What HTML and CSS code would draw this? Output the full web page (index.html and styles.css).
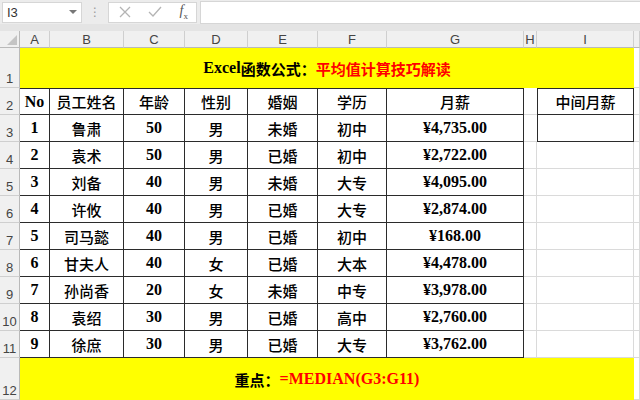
FILE: index.html
```html
<!DOCTYPE html>
<html lang="zh-CN">
<head>
	<meta charset="UTF-8">
	<meta name="viewport" content="width=device-width, initial-scale=1.0">
	<title>平均值计算技巧解读</title>
	<link rel="stylesheet" href="styles.css">
</head>
<body>
	<div class="toolbar">
		<div class="namebox">
			<span>I3</span>
			<span class="caret"></span>
		</div>
		<div class="dots">⋮</div>
		<div class="fxbox">
			<svg width="12" height="12" viewBox="0 0 12 12"><path d="M1 1 L11 11 M11 1 L1 11" stroke="#b4b4b4" stroke-width="1.3" fill="none"/></svg>
			<svg width="14" height="12" viewBox="0 0 14 12"><path d="M1 6 L5 10 L13 1" stroke="#b4b4b4" stroke-width="1.3" fill="none"/></svg>
			<span class="fx"><i>f</i><sub>x</sub></span>
		</div>
		<div class="formula"></div>
	</div>

	<div class="sheet">
		<!-- column headers -->
		<div class="c corner"><span class="tri"></span></div>
		<div class="c ch">A</div>
		<div class="c ch">B</div>
		<div class="c ch">C</div>
		<div class="c ch">D</div>
		<div class="c ch">E</div>
		<div class="c ch">F</div>
		<div class="c ch">G</div>
		<div class="c ch">H</div>
		<div class="c ch">I</div>
		<div class="c ch"></div>

		<!-- row 1 -->
		<div class="c rn">1</div>
		<div class="c banner">Excel<span class="zh">函数公式：</span><span class="zh red">平均值计算技巧解读</span></div>
		<div class="c"></div>

		<!-- row 2 -->
		<div class="c rn">2</div>
		<div class="c t top">No</div>
		<div class="c t top zh">员工姓名</div>
		<div class="c t top zh">年龄</div>
		<div class="c t top zh">性别</div>
		<div class="c t top zh">婚姻</div>
		<div class="c t top zh">学历</div>
		<div class="c t top zh">月薪</div>
		<div class="c gap"></div>
		<div class="c t top side zh">中间月薪</div>
		<div class="c"></div>

		<!-- row 3 -->
		<div class="c rn">3</div>
		<div class="c t">1</div>
		<div class="c t zh">鲁肃</div>
		<div class="c t">50</div>
		<div class="c t zh">男</div>
		<div class="c t zh">未婚</div>
		<div class="c t zh">初中</div>
		<div class="c t">¥4,735.00</div>
		<div class="c gap"></div>
		<div class="c t side"></div>
		<div class="c"></div>

		<!-- row 4 -->
		<div class="c rn">4</div>
		<div class="c t">2</div>
		<div class="c t zh">袁术</div>
		<div class="c t">50</div>
		<div class="c t zh">男</div>
		<div class="c t zh">已婚</div>
		<div class="c t zh">初中</div>
		<div class="c t">¥2,722.00</div>
		<div class="c"></div>
		<div class="c"></div>
		<div class="c"></div>

		<!-- row 5 -->
		<div class="c rn">5</div>
		<div class="c t">3</div>
		<div class="c t zh">刘备</div>
		<div class="c t">40</div>
		<div class="c t zh">男</div>
		<div class="c t zh">未婚</div>
		<div class="c t zh">大专</div>
		<div class="c t">¥4,095.00</div>
		<div class="c"></div>
		<div class="c"></div>
		<div class="c"></div>

		<!-- row 6 -->
		<div class="c rn">6</div>
		<div class="c t">4</div>
		<div class="c t zh">许攸</div>
		<div class="c t">40</div>
		<div class="c t zh">男</div>
		<div class="c t zh">已婚</div>
		<div class="c t zh">大专</div>
		<div class="c t">¥2,874.00</div>
		<div class="c"></div>
		<div class="c"></div>
		<div class="c"></div>

		<!-- row 7 -->
		<div class="c rn">7</div>
		<div class="c t">5</div>
		<div class="c t zh">司马懿</div>
		<div class="c t">40</div>
		<div class="c t zh">男</div>
		<div class="c t zh">已婚</div>
		<div class="c t zh">初中</div>
		<div class="c t">¥168.00</div>
		<div class="c"></div>
		<div class="c"></div>
		<div class="c"></div>

		<!-- row 8 -->
		<div class="c rn">8</div>
		<div class="c t">6</div>
		<div class="c t zh">甘夫人</div>
		<div class="c t">40</div>
		<div class="c t zh">女</div>
		<div class="c t zh">已婚</div>
		<div class="c t zh">大本</div>
		<div class="c t">¥4,478.00</div>
		<div class="c"></div>
		<div class="c"></div>
		<div class="c"></div>

		<!-- row 9 -->
		<div class="c rn">9</div>
		<div class="c t">7</div>
		<div class="c t zh">孙尚香</div>
		<div class="c t">20</div>
		<div class="c t zh">女</div>
		<div class="c t zh">未婚</div>
		<div class="c t zh">中专</div>
		<div class="c t">¥3,978.00</div>
		<div class="c"></div>
		<div class="c"></div>
		<div class="c"></div>

		<!-- row 10 -->
		<div class="c rn">10</div>
		<div class="c t">8</div>
		<div class="c t zh">袁绍</div>
		<div class="c t">30</div>
		<div class="c t zh">男</div>
		<div class="c t zh">已婚</div>
		<div class="c t zh">高中</div>
		<div class="c t">¥2,760.00</div>
		<div class="c"></div>
		<div class="c"></div>
		<div class="c"></div>

		<!-- row 11 -->
		<div class="c rn">11</div>
		<div class="c t">9</div>
		<div class="c t zh">徐庶</div>
		<div class="c t">30</div>
		<div class="c t zh">男</div>
		<div class="c t zh">已婚</div>
		<div class="c t zh">大专</div>
		<div class="c t">¥3,762.00</div>
		<div class="c"></div>
		<div class="c"></div>
		<div class="c"></div>

		<!-- row 12 -->
		<div class="c rn">12</div>
		<div class="c banner"><span class="zh">重点：</span><span class="red">=MEDIAN(G3:G11)</span></div>
		<div class="c"></div>
	</div>
</body>
</html>
```

FILE: styles.css
```css
body {
	margin: 0;
	width: 640px;
	height: 400px;
	overflow: hidden;
	background-color: #fff;
}

.toolbar {
	display: flex;
	align-items: center;
	height: 24px;
	padding-bottom: 7px;
	background-color: #ececec;
	box-shadow: inset 0 -7px 0 #e4e4e4;
}

.namebox {
	display: flex;
	align-items: center;
	justify-content: space-between;
	box-sizing: border-box;
	width: 80px;
	height: 21px;
	margin-left: 2px;
	padding: 0 4px;
	background-color: #fff;
	border: 1px solid #d6d6d6;
	font-family: "Liberation Sans", sans-serif;
	font-size: 13px;
	color: #333;
}

.caret {
	width: 0;
	height: 0;
	border-left: 4px solid transparent;
	border-right: 4px solid transparent;
	border-top: 4px solid #777;
}

.dots {
	width: 26px;
	text-align: center;
	font-family: "DejaVu Sans", sans-serif;
	font-size: 12px;
	color: #9a9a9a;
}

.fxbox {
	display: flex;
	align-items: center;
	justify-content: space-between;
	box-sizing: border-box;
	width: 89px;
	height: 21px;
	padding: 0 8px 0 10px;
	background-color: #fff;
	border: 1px solid #d6d6d6;
}

.fx {
	font-family: "Liberation Serif", serif;
	font-size: 14px;
	color: #555;
}

.fx sub {
	font-size: 9px;
}

.formula {
	flex: 1;
	height: 21px;
	margin-left: 3px;
	background-color: #fff;
	border-left: 1px solid #d6d6d6;
	border-top: 1px solid #d6d6d6;
	border-bottom: 1px solid #d6d6d6;
}

.sheet {
	display: grid;
	grid-template-columns: 20px 30px 74px 61px 63px 70px 69px 137px 13px 97px 1fr;
	grid-template-rows: 17px 40px repeat(10, 27px) 42px;
	font-family: "Liberation Serif", "Noto Sans CJK SC", serif;
	font-weight: bold;
	font-size: 16px;
	color: #000;
}

.zh {
	font-family: "Noto Sans CJK SC", sans-serif;
	font-weight: 500;
	font-size: 15px;
}

.banner .zh {
	font-weight: bold;
}

.c {
	display: flex;
	align-items: center;
	justify-content: center;
	box-sizing: border-box;
	border-right: 1px solid #dadada;
	border-bottom: 1px solid #dadada;
	white-space: nowrap;
}

.ch {
	background-color: #f0f0f0;
	border-right-color: #cfcfcf;
	border-bottom-color: #b9b9b9;
	font-family: "Liberation Sans", sans-serif;
	font-weight: normal;
	font-size: 13px;
	color: #444;
}

.corner {
	position: relative;
	background-color: #f0f0f0;
	border-right-color: #b9b9b9;
	border-bottom-color: #b9b9b9;
}

.tri {
	position: absolute;
	right: 2px;
	bottom: 2px;
	width: 0;
	height: 0;
	border-left: 10px solid transparent;
	border-bottom: 10px solid #c4c4c4;
}

.rn {
	align-items: flex-end;
	padding-bottom: 1px;
	background-color: #f0f0f0;
	border-right-color: #b9b9b9;
	border-bottom-color: #cfcfcf;
	font-family: "Liberation Sans", sans-serif;
	font-weight: normal;
	font-size: 13px;
	color: #444;
}

.banner {
	grid-column: 2 / 11;
	background-color: #ffff00;
	border-right: none;
	border-bottom: none;
}

.red {
	color: #ff0000;
}

.t {
	border-right-color: #2b2b2b;
	border-bottom-color: #2b2b2b;
}

.top {
	border-top: 1px solid #2b2b2b;
}

.side {
	border-left: 1px solid #2b2b2b;
}

.gap {
	border-right: none;
}
```
